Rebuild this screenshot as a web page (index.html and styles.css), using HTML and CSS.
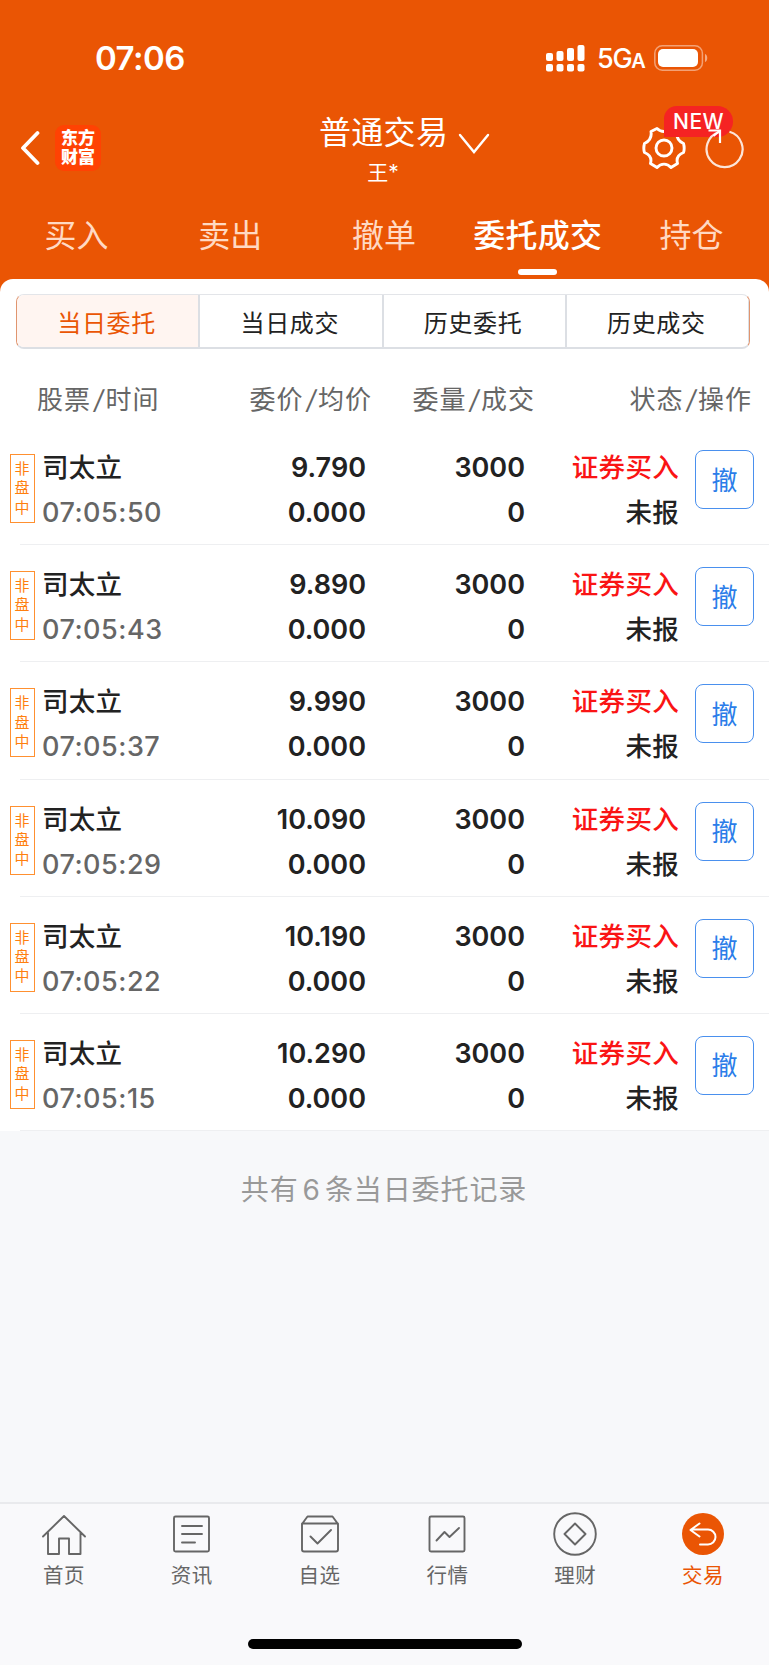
FILE: index.html
```html
<!DOCTYPE html>
<html lang="zh-CN">
<head>
    <meta charset="UTF-8">
    <meta name="viewport" content="width=device-width, initial-scale=1.0">
    <title>普通交易 - 委托成交</title>
    <link rel="stylesheet" href="styles.css">
</head>
<body>
    <header class="top">
        <!-- Status bar -->
        <div class="status-bar">
            <span class="clock">07:06</span>
            <div class="status-icons">
                <svg class="signal" width="39" height="28" viewBox="0 0 39 28" fill="#fff">
                    <rect x="0" y="9" width="7" height="8" rx="2"/>
                    <rect x="10.5" y="7" width="7" height="10" rx="2"/>
                    <rect x="21" y="4" width="7" height="13" rx="2"/>
                    <rect x="31.5" y="1" width="7" height="16" rx="2"/>
                    <rect x="0" y="20" width="7" height="7.5" rx="2"/>
                    <rect x="10.5" y="20" width="7" height="7.5" rx="2"/>
                    <rect x="21" y="20" width="7" height="7.5" rx="2"/>
                    <rect x="31.5" y="20" width="7" height="7.5" rx="2"/>
                </svg>
                <span class="network">5G<small>A</small></span>
                <svg class="battery" width="54" height="26" viewBox="0 0 54 26">
                    <rect x="0.8" y="0.8" width="47.6" height="24.4" rx="7.5" fill="none" stroke="#fff" stroke-opacity="0.45" stroke-width="1.5"/>
                    <rect x="4" y="4" width="40" height="18" rx="5" fill="#fff"/>
                    <path d="M51 9c3 1 3 7 0 8z" fill="#fff" fill-opacity="0.5"/>
                </svg>
            </div>
        </div>

        <!-- Title bar -->
        <div class="nav-bar">
            <div class="nav-left">
                <svg class="back" width="20" height="36" viewBox="0 0 20 36" fill="none" stroke="#fff" stroke-width="3.8" stroke-linecap="round" stroke-linejoin="round">
                    <path d="M17.5 3L3 18l14.5 15"/>
                </svg>
                <div class="logo">东方<br>财富</div>
            </div>
            <div class="nav-title">
                <h1>普通交易</h1>
                <p>王*</p>
            </div>
            <svg class="arrow-down" width="32" height="22" viewBox="0 0 32 22" fill="none" stroke="#fff" stroke-width="2.4" stroke-linecap="round">
                <path d="M2 2l14 17L30 2"/>
            </svg>
            <div class="nav-right">
                <svg class="gear" width="44" height="44" viewBox="0 0 44 44" fill="none" stroke="#fff" stroke-width="2.9" stroke-linejoin="round">
                    <path d="M15 2.5L9 5.5C10 11.500 8 15 2.500 17.500C1.500 21 1.500 23.500 2.500 26.500C7.500 28.500 10 32 8.500 37.500L15 41.500C19 37 25 37 29 41.500L35.500 37.500C34 32 36.500 28.500 41.500 26.500C42.500 23.500 42.500 21 41.500 17.500C36 15 34 11.500 35 5.500L29 2.500C25 6.500 19 6.500 15 2.500Z"/>
                    <circle cx="22" cy="22" r="8"/>
                </svg>
                <span class="new-badge">NEW</span>
                <svg class="refresh" width="42" height="42" viewBox="0 0 42 42" fill="none" stroke="#fff" stroke-width="2.2">
                    <path d="M15 5A18 18 0 1 0 25.5 4.8" stroke-opacity="0.85"/>
                    <path d="M4.500 3.500H16V16"/>
                    <path d="M16 3.500L9.500 9"/>
                </svg>
            </div>
        </div>

        <nav class="tabs">
            <a>买入</a>
            <a>卖出</a>
            <a>撤单</a>
            <a class="active">委托成交</a>
            <a>持仓</a>
        </nav>
    </header>

    <main class="panel">
        <div class="segment">
            <button class="active">当日委托</button>
            <button>当日成交</button>
            <button>历史委托</button>
            <button>历史成交</button>
        </div>

        <div class="row list-head">
            <span class="c1">股票<i>/</i>时间</span>
            <span class="c2">委价<i>/</i>均价</span>
            <span class="c3">委量<i>/</i>成交</span>
            <span class="c4">状态<i>/</i>操作</span>
        </div>

        <div class="row order">
            <div class="tag">非盘中</div>
            <div class="c1"><b>司太立</b><span class="time">07:05:50</span></div>
            <div class="c2"><span>9.790</span><span>0.000</span></div>
            <div class="c3"><span>3000</span><span>0</span></div>
            <div class="c4"><b class="buy">证券买入</b><b>未报</b></div>
            <button class="cancel">撤</button>
        </div>
        <div class="row order">
            <div class="tag">非盘中</div>
            <div class="c1"><b>司太立</b><span class="time">07:05:43</span></div>
            <div class="c2"><span>9.890</span><span>0.000</span></div>
            <div class="c3"><span>3000</span><span>0</span></div>
            <div class="c4"><b class="buy">证券买入</b><b>未报</b></div>
            <button class="cancel">撤</button>
        </div>
        <div class="row order">
            <div class="tag">非盘中</div>
            <div class="c1"><b>司太立</b><span class="time">07:05:37</span></div>
            <div class="c2"><span>9.990</span><span>0.000</span></div>
            <div class="c3"><span>3000</span><span>0</span></div>
            <div class="c4"><b class="buy">证券买入</b><b>未报</b></div>
            <button class="cancel">撤</button>
        </div>
        <div class="row order">
            <div class="tag">非盘中</div>
            <div class="c1"><b>司太立</b><span class="time">07:05:29</span></div>
            <div class="c2"><span>10.090</span><span>0.000</span></div>
            <div class="c3"><span>3000</span><span>0</span></div>
            <div class="c4"><b class="buy">证券买入</b><b>未报</b></div>
            <button class="cancel">撤</button>
        </div>
        <div class="row order">
            <div class="tag">非盘中</div>
            <div class="c1"><b>司太立</b><span class="time">07:05:22</span></div>
            <div class="c2"><span>10.190</span><span>0.000</span></div>
            <div class="c3"><span>3000</span><span>0</span></div>
            <div class="c4"><b class="buy">证券买入</b><b>未报</b></div>
            <button class="cancel">撤</button>
        </div>
        <div class="row order">
            <div class="tag">非盘中</div>
            <div class="c1"><b>司太立</b><span class="time">07:05:15</span></div>
            <div class="c2"><span>10.290</span><span>0.000</span></div>
            <div class="c3"><span>3000</span><span>0</span></div>
            <div class="c4"><b class="buy">证券买入</b><b>未报</b></div>
            <button class="cancel">撤</button>
        </div>
    </main>

    <p class="total">共有<span>6</span>条当日委托记录</p>

    <!-- Bottom tab bar -->
    <footer class="tab-bar">
        <div class="tab-items">
            <a>
                <svg width="44" height="44" viewBox="0 0 44 44">
                    <path d="M1 24.5L22 4l21 20.500M6 20.500V42h11V26.500h10V42h11.500V20.500"/>
                </svg>
                首页
            </a>
            <a>
                <svg width="44" height="44" viewBox="0 0 44 44">
                    <rect x="4" y="4.5" width="35" height="35" rx="1.5"/>
                    <path d="M12 14h20M12 22h20M12 30.500h13"/>
                </svg>
                资讯
            </a>
            <a>
                <svg width="44" height="44" viewBox="0 0 44 44">
                    <path d="M4 12l5.500-7.500h25L40 12v25.500a2 2 0 0 1-2 2H6a2 2 0 0 1-2-2zM4 11.500h36M12.500 24.500l7 7L33 18"/>
                </svg>
                自选
            </a>
            <a>
                <svg width="44" height="44" viewBox="0 0 44 44">
                    <rect x="4.5" y="4.5" width="35" height="35" rx="1.5"/>
                    <path d="M11.500 28.500l8-8.500 5 5L34 16"/>
                </svg>
                行情
            </a>
            <a>
                <svg width="44" height="44" viewBox="0 0 44 44">
                    <circle cx="22" cy="22" r="20.8"/>
                    <path d="M22 11.500L32.500 22 22 32.500 11.500 22z"/>
                </svg>
                理财
            </a>
            <a class="active">
                <svg width="44" height="44" viewBox="0 0 44 44">
                    <circle class="disc" cx="22" cy="22" r="21"/>
                    <path d="M18.500 11.500l-9 6.500L18.500 24.500M10 17.500h17a7.500 7.500 0 0 1 0 15H19"/>
                </svg>
                交易
            </a>
        </div>
        <div class="home-indicator"></div>
    </footer>
</body>
</html>
```
FILE: styles.css
```css
* {
    box-sizing: border-box;
    margin: 0;
    padding: 0;
}
body {
    width: 769px;
    height: 1665px;
    display: flex;
    flex-direction: column;
    overflow: hidden;
    background-color: #f7f8fa;
    font-family: Inter, "Noto Sans CJK SC", sans-serif;
    color: #222;
}
button {
    font-family: inherit;
    background: none;
    border: none;
}
svg {
    display: block;
    flex: none;
}

/* header */
.top {
    height: 292px;
    flex: none;
    background-color: #ea5504;
    color: #fff;
}
.status-bar {
    height: 100px;
    padding: 15px 61px 0 95px;
    display: flex;
    align-items: center;
    justify-content: space-between;
}
.clock {
    font-size: 33px;
    font-weight: 600;
    letter-spacing: -0.5px;
}
.status-icons {
    display: flex;
    align-items: center;
    gap: 12px;
}
.network {
    width: 45px;
    padding-top: 2px;
    font-size: 27px;
    font-weight: 500;
    letter-spacing: -1.3px;
    white-space: nowrap;
}
.network small {
    font-size: 20px;
    font-weight: 600;
}
.nav-bar {
    height: 100px;
    padding: 0 23px 0 20px;
    display: grid;
    grid-template-columns: 299px 128px 42px 1fr;
}
.nav-left {
    display: flex;
    align-items: center;
    gap: 15px;
    height: 95px;
}
.logo {
    width: 46px;
    height: 46px;
    padding-top: 4px;
    border-radius: 9px;
    background-color: #ff4203;
    font-size: 17px;
    font-weight: 900;
    line-height: 19px;
    text-align: center;
}
.nav-title {
    text-align: center;
    padding-top: 13px;
}
.nav-title h1 {
    font-size: 32px;
    font-weight: 400;
    line-height: 40px;
    letter-spacing: 0.3px;
    white-space: nowrap;
}
.nav-title p {
    font-size: 21px;
    line-height: 40px;
}
.arrow-down {
    margin: 33px 0 0 11px;
}
.nav-right {
    position: relative;
    display: flex;
    align-items: center;
    justify-content: flex-end;
    gap: 18px;
    height: 96px;
}
.new-badge {
    position: absolute;
    right: 13px;
    top: 6px;
    width: 69px;
    height: 31px;
    border-radius: 13px 16px 16px 0;
    background-color: #f52323;
    font-size: 21px;
    font-weight: 500;
    line-height: 31px;
    letter-spacing: 0.4px;
    text-align: center;
}
.refresh {
    position: relative;
}
.tabs {
    display: flex;
    height: 79px;
}
.tabs a {
    position: relative;
    flex: 1;
    padding-right: 1px;
    font-size: 32px;
    line-height: 71px;
    text-align: center;
    white-space: nowrap;
    color: #ffd9c3;
}
.tabs .active {
    color: #fff;
    font-weight: 500;
    letter-spacing: 0.3px;
}
.tabs .active::after {
    content: "";
    position: absolute;
    left: 57px;
    bottom: 4px;
    width: 39px;
    height: 6px;
    border-radius: 3px;
    background-color: #fff;
}

/* order list */
.panel {
    position: relative;
    flex: none;
    margin-top: -13px;
    padding-top: 15px;
    border-radius: 13px 13px 0 0;
    background-color: #fff;
}
.segment {
    display: flex;
    height: 55px;
    margin: 0 19px 0 16px;
    border: 1px solid #e0956f;
    border-top-color: #e3e5e9;
    border-bottom: 2px solid #dcdfe4;
    border-right-color: #e0956f;
    border-radius: 8px;
    overflow: hidden;
}
.segment button {
    flex: 1;
    padding-right: 2px;
    font-size: 24px;
    letter-spacing: 0.7px;
    color: #222;
    border-right: 2px solid #dcdfe4;
}
.segment button:last-child {
    border-right-width: 1px;
}
.segment .active {
    background-color: #fff5f1;
    color: #ea5504;
}
.row {
    display: grid;
    grid-template-columns: 32px 180px 144px 159px 154px 1fr;
    padding-left: 10px;
}
.c2, .c3, .c4 {
    text-align: right;
}
.list-head {
    display: flex;
    height: 79px;
    padding: 0 17px 0 37px;
    font-size: 26px;
    line-height: 102px;
    letter-spacing: 1px;
    color: #666;
    white-space: nowrap;
}
.list-head .c1 {
    width: 128px;
}
.list-head .c2 {
    width: 207px;
}
.list-head .c3 {
    width: 163px;
}
.list-head .c4 {
    flex: 1;
}
.list-head i {
    margin: 0 1px 0 3px;
}
.order {
    position: relative;
    height: 117.2px;
    padding-top: 17px;
    font-size: 27px;
    font-weight: 600;
    line-height: 45px;
}
.order::after {
    content: "";
    position: absolute;
    left: 20px;
    right: 0;
    bottom: 0;
    height: 1px;
    background-color: #eeeff1;
}
.order span, .order b {
    display: block;
}
.order b {
    font-size: 26.5px;
    font-weight: 500;
    letter-spacing: 0.3px;
}
.order .time {
    font-weight: 500;
    letter-spacing: 0.5px;
    color: #666;
}
.order .buy {
    color: #fa1414;
}
.tag {
    width: 25px;
    height: 69px;
    margin-top: 9px;
    padding: 4px 4px 0 3px;
    border: 1.5px solid #ff9030;
    font-size: 15px;
    font-weight: 400;
    line-height: 19.3px;
    text-align: center;
    color: #ff7f0e;
}
.cancel {
    width: 59px;
    height: 59px;
    margin: 5px 0 0 16px;
    padding-bottom: 3px;
    border: 1.5px solid #4a90ee;
    border-radius: 8px;
    font-size: 26px;
    color: #2b7de9;
}
.total {
    padding: 38px 1px 0 0;
    font-size: 28px;
    line-height: 42px;
    letter-spacing: 0.9px;
    text-align: center;
    color: #999;
}
.total span {
    margin: 0 4px;
}

/* bottom bar */
.tab-bar {
    height: 163px;
    margin-top: auto;
    flex: none;
    border-top: 2px solid #e9eaed;
    background-color: #f9f9fb;
}
.tab-items {
    display: flex;
    padding: 8px 2px 0 0;
    height: 135px;
}
.tab-items a {
    flex: 1;
    display: flex;
    flex-direction: column;
    align-items: center;
    font-size: 20.5px;
    line-height: 39px;
    letter-spacing: 0.5px;
    color: #666;
}
.tab-items svg {
    fill: none;
    stroke: #666;
    stroke-width: 1.9;
    stroke-linecap: round;
    stroke-linejoin: round;
}
.tab-items .active {
    color: #ea5504;
}
.tab-items .active svg {
    stroke: #fff;
    stroke-width: 2;
}
.tab-items .disc {
    fill: #ea5504;
    stroke: none;
}
.home-indicator {
    width: 274px;
    height: 10px;
    margin: 0 auto;
    border-radius: 5px;
    background-color: #000;
}
```
